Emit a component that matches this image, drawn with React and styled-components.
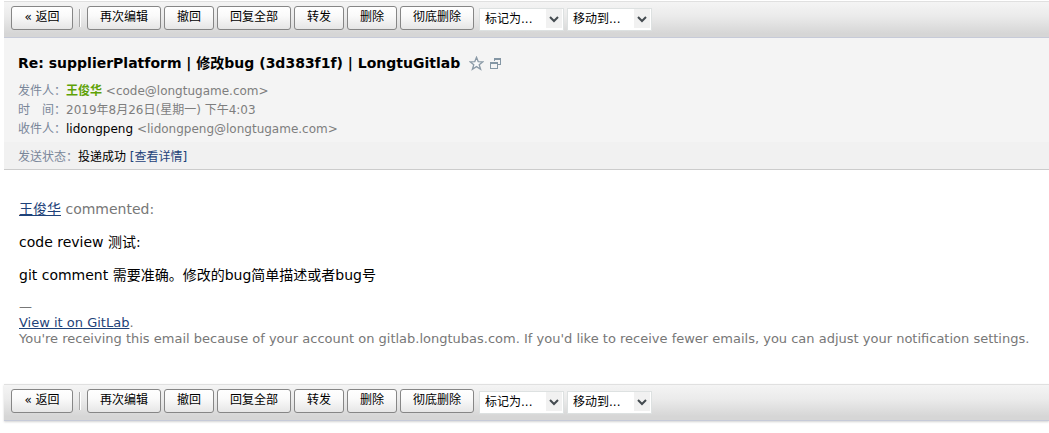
import React from "react";
import styled, { createGlobalStyle } from "styled-components";

const GlobalStyle = createGlobalStyle`
  * { box-sizing: border-box; }
  body {
    margin: 0;
    background: #fff;
    color: #000;
    font-family: "DejaVu Sans", "Noto Sans CJK SC", sans-serif;
    font-size: 12px;
  }
`;

const Page = styled.main`
  padding: 1px 0 12px 4px;
`;

const Bar = styled.div`
  display: flex;
  align-items: flex-start;
  height: 37px;
  padding: 4px 7px 0;
  border-top: 1px solid #e0e0e0;
  border-bottom: 1px solid #c6cad8;
  background: linear-gradient(#f4f4f4, #ebebeb 40%, #d6d6d6 90%, #d6d6d6);
  box-shadow: ${(p) => (p.$raised ? "0 1px 2px #d4d4d4" : "none")};
`;

const BarButton = styled.button`
  flex: none;
  height: 24px;
  width: ${(p) => p.$width}px;
  margin-right: 3px;
  padding: 0 0 2px;
  border: 1px solid #868686;
  border-radius: 3px;
  background: linear-gradient(#fff, #fafafa 40%, #e6e6e6);
  color: #000;
  font: 12px/20px "DejaVu Sans", "Noto Sans CJK SC", sans-serif;
  white-space: nowrap;
`;

const Divider = styled.span`
  flex: none;
  width: 2px;
  height: 18px;
  margin: 3px 6px 0 3px;
  border-left: 1px solid #a8a8a8;
  border-right: 1px solid #fff;
`;

const SelectBox = styled.label`
  position: relative;
  flex: none;
  width: 85px;
  height: 23px;
  margin: 2px 1px 0 2px;
`;

const Select = styled.select`
  appearance: none;
  width: 100%;
  height: 100%;
  padding: 0 20px 2px 5px;
  border: 1px solid #dde1e1;
  border-radius: 0;
  background: #fff;
  color: #000;
  font: 12px/18px "DejaVu Sans", "Noto Sans CJK SC", sans-serif;
`;

const Arrow = styled.svg`
  position: absolute;
  top: 1px;
  right: 2px;
  width: 16px;
  height: 19px;
  background: #f1f1f1;
  pointer-events: none;
`;

const Header = styled.header`
  border-bottom: 1px solid #ccc;
  background: #f4f4f4;
`;

const Heading = styled.div`
  display: flex;
  align-items: center;
  gap: 5px;
  padding: 14px 14px 0;
`;

const Subject = styled.h1`
  margin: 0 4px 0 0;
  font-size: 14px;
  line-height: 22px;
  font-weight: bold;
`;

const IconButton = styled.button`
  display: flex;
  padding: 0;
  border: 0;
  background: none;
`;

const Details = styled.dl`
  margin: 0;
  padding: 8px 14px 3px;
`;

const Detail = styled.div`
  display: flex;
  height: 19px;
  line-height: 18px;
  white-space: nowrap;
`;

const Term = styled.dt`
  color: #798699;
`;

const Value = styled.dd`
  margin: 0;
  color: #7e7e7e;
`;

const Name = styled.span`
  color: ${(p) => (p.$sender ? "#5fa207" : "#000")};
  font-weight: ${(p) => (p.$sender ? "bold" : "normal")};
`;

const Status = styled.dl`
  display: flex;
  height: 27px;
  margin: 0;
  padding: 4px 14px 0;
  background: #f1f1f1;
  line-height: 23px;
`;

const Link = styled.a`
  color: #1e4279;
  text-decoration: ${(p) => (p.$plain ? "none" : "underline")};
`;

const Message = styled.article`
  padding: 15px 10px 37px 15px;
  font-size: 14px;
  line-height: 17px;
`;

const Paragraph = styled.p`
  margin: 0;
  padding-top: 16px;
  color: ${(p) => (p.$muted ? "#777" : "#000")};
`;

const Footnote = styled.p`
  margin: 15px 0 0;
  color: #777;
  font-size: 13px;
  line-height: 16px;
`;

const actions = [
  ["再次编辑", 74],
  ["撤回", 50],
  ["回复全部", 74],
  ["转发", 50],
  ["删除", 50],
  ["彻底删除", 74],
];

function DropDown({ label }) {
  return (
    <SelectBox>
      <Select aria-label={label}>
        <option>{label}</option>
      </Select>
      <Arrow viewBox="0 0 16 19" aria-hidden="true">
        <path d="M4 8l4 4 4-4" fill="none" stroke="#444b50" strokeWidth="2" />
      </Arrow>
    </SelectBox>
  );
}

function Toolbar({ raised }) {
  return (
    <Bar role="toolbar" $raised={raised}>
      <BarButton $width={62}>« 返回</BarButton>
      <Divider />
      {actions.map(([text, width]) => (
        <BarButton key={text} $width={width}>
          {text}
        </BarButton>
      ))}
      <DropDown label="标记为..." />
      <DropDown label="移动到..." />
    </Bar>
  );
}

export default function App() {
  return (
    <>
      <GlobalStyle />
      <Page>
        <Toolbar />
        <Header>
          <Heading>
            <Subject>Re: supplierPlatform | 修改bug (3d383f1f) | LongtuGitlab</Subject>
            <IconButton aria-label="星标">
              <svg width="15" height="15" viewBox="0 0 15 15">
                <path
                  d="M7.5 1.3l1.7 4.3 4.7.2-3.7 2.9 1.4 4.6-4.1-2.7-4.1 2.7 1.4-4.6L1.1 5.8l4.7-.2z"
                  fill="#f8f9fa"
                  stroke="#8b9aa7"
                  strokeWidth="1.3"
                />
              </svg>
            </IconButton>
            <IconButton aria-label="新窗口">
              <svg width="13" height="13" viewBox="0 0 13 13" fill="#8496a4">
                <path d="M5 1h7v7H9V7h2V3H6v1H5z" />
                <path fillRule="evenodd" d="M1 5h8v7H1zM2 7v4h6V7z" />
              </svg>
            </IconButton>
          </Heading>
          <Details>
            <Detail>
              <Term>发件人：</Term>
              <Value>
                <Name $sender>王俊华</Name> &lt;code@longtugame.com&gt;
              </Value>
            </Detail>
            <Detail>
              <Term>时　间：</Term>
              <Value>2019年8月26日(星期一) 下午4:03</Value>
            </Detail>
            <Detail>
              <Term>收件人：</Term>
              <Value>
                <Name>lidongpeng</Name> &lt;lidongpeng@longtugame.com&gt;
              </Value>
            </Detail>
          </Details>
          <Status>
            <Term>发送状态：</Term>
            <Value>
              <Name>投递成功</Name>{" "}
              <Link href="#details" $plain>
                [查看详情]
              </Link>
            </Value>
          </Status>
        </Header>
        <Message>
          <Paragraph $muted>
            <Link href="#author">王俊华</Link> commented:
          </Paragraph>
          <Paragraph>code review 测试:</Paragraph>
          <Paragraph>git comment 需要准确。修改的bug简单描述或者bug号</Paragraph>
          <Footnote>
            —<br />
            <Link href="#gitlab">View it on GitLab</Link>.<br />
            You're receiving this email because of your account on gitlab.longtubas.com. If you'd
            like to receive fewer emails, you can adjust your notification settings.
          </Footnote>
        </Message>
        <Toolbar raised />
      </Page>
    </>
  );
}
